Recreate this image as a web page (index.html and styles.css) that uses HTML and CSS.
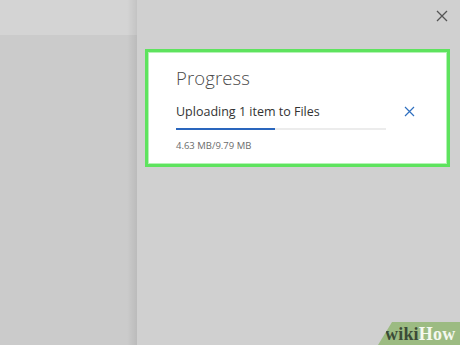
FILE: index.html
```html
<!DOCTYPE html>
<html>
<head>
<meta charset="utf-8">
<link rel="stylesheet" href="styles.css">
</head>
<body>
<div class="app">
  <div class="left">
    <div class="left-top"></div>
    <div class="left-body"></div>
  </div>
  <div class="panel">
    <div class="panel-head">
      <svg class="close" width="12" height="12" viewBox="0 0 12 12"><path d="M1 1L11 11M11 1L1 11" stroke="#555" stroke-width="1.3" fill="none"/></svg>
    </div>
    <div class="card">
      <div class="title">Progress</div>
      <div class="row">
        <div class="info">
          <div class="label">Uploading 1 item to Files</div>
          <div class="track"><div class="fill" style="width:47%"></div></div>
          <div class="size">4.63 MB/9.79 MB</div>
        </div>
        <svg class="cancel" width="11" height="11" viewBox="0 0 11 11"><path d="M1 1L10 10M10 1L1 10" stroke="#2f6fbf" stroke-width="1.2" fill="none"/></svg>
      </div>
    </div>
  </div>
</div>
<div class="wiki"><span class="wk">wiki</span><span class="hw">How</span></div>
</body>
</html>
```
FILE: styles.css
```css
html, body { margin: 0; padding: 0; }
body { width: 460px; height: 345px; overflow: hidden; background: #cdcdcd; position: relative; font-family: "Open Sans", "Noto Sans", sans-serif; }
.app { display: flex; height: 345px; }
.left { width: 137px; display: flex; flex-direction: column; position: relative; }
.left-top { height: 35px; background: #d4d4d4; }
.left-body { flex: 1; background: #cbcbcb; }
.left::after { content: ""; position: absolute; top: 0; right: 0; width: 10px; height: 100%; background: linear-gradient(to right, rgba(0,0,0,0), rgba(0,0,0,0.08)); }
.panel { flex: 1; background: #d0d0d0; display: flex; flex-direction: column; }
.panel-head { height: 49px; display: flex; justify-content: flex-end; padding: 10px 12px 0 0; box-sizing: border-box; }
.close { display: block; }
.card { margin-left: 8px; width: 305px; height: 118px; box-sizing: border-box; border: 3px solid #5ee35e; background: #fff; box-shadow: inset 0 0 0 1px #b5f3b5; padding: 14px 0 0 28px; }
.title { font-size: 18.5px; font-weight: 300; color: #4a4a4a; line-height: 24px; letter-spacing: 0.1px; }
.row { display: flex; align-items: flex-start; margin-top: 13px; }
.info { width: 210px; }
.label { font-size: 12.5px; color: #333; line-height: 17px; }
.track { height: 2px; background: #ececec; margin-top: 8px; }
.fill { height: 2px; background: #2a66bd; }
.size { font-size: 9.5px; color: #6b6b6b; margin-top: 10px; line-height: 12px; }
.cancel { margin-left: 18px; margin-top: 3px; display: block; }
.wiki { position: absolute; right: 0; bottom: 0; height: 23px; width: 82px; background: #9cbb82; clip-path: polygon(14px 0, 100% 0, 100% 100%, 0 100%); font-family: "Liberation Serif", serif; font-weight: bold; font-size: 18px; line-height: 24px; padding-left: 7px; box-sizing: border-box; white-space: nowrap; letter-spacing: 0.2px; }
.wk { color: #3b4b37; }
.hw { color: #f4f8ef; }
```
